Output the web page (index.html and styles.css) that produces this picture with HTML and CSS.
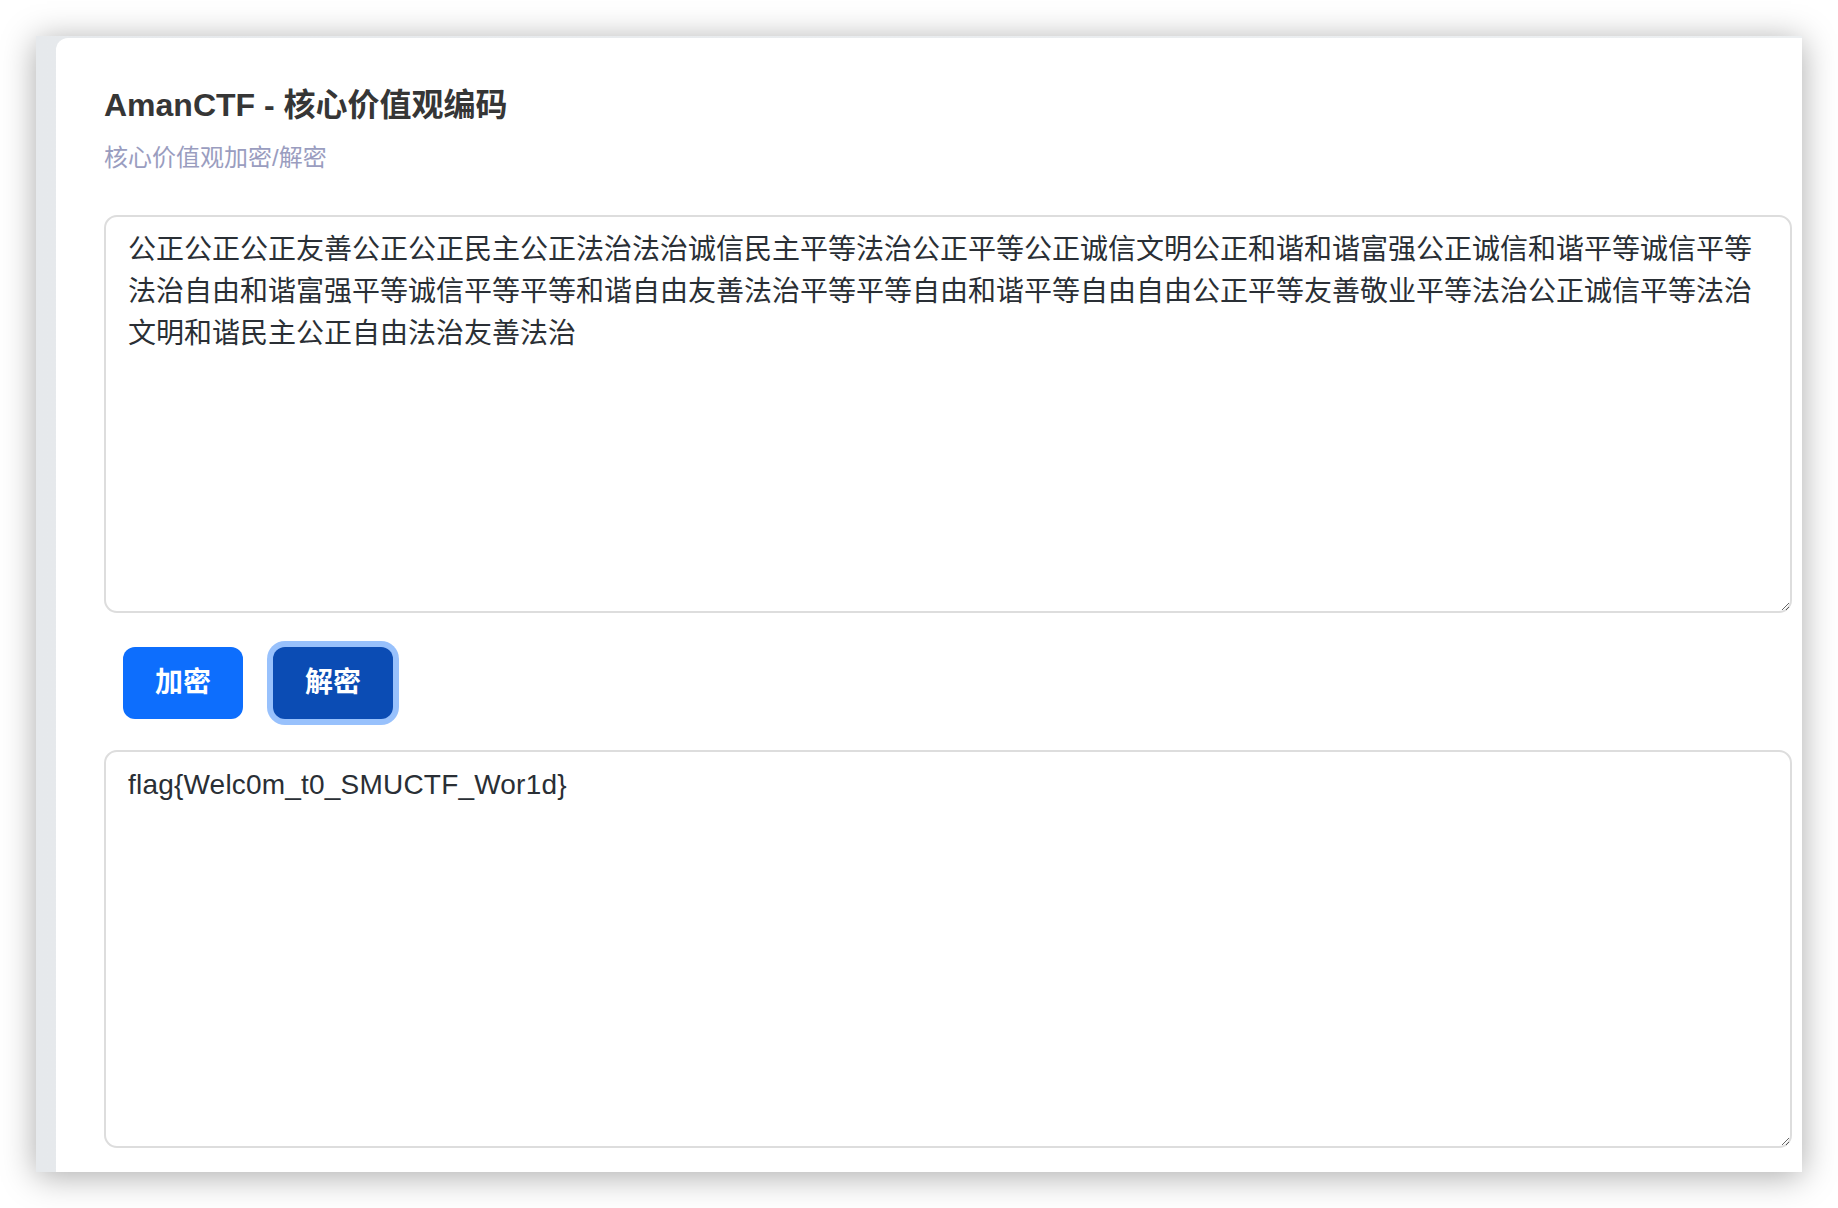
FILE: index.html
```html
<!DOCTYPE html>
<html lang="zh-CN">
<head>
<meta charset="utf-8">
<title>AmanCTF - 核心价值观编码</title>
<link rel="stylesheet" href="styles.css">
</head>
<body>
<div class="stage">
  <div class="window">
    <div class="card">
      <h1 class="title">AmanCTF - 核心价值观编码</h1>
      <p class="subtitle">核心价值观加密/解密</p>
      <textarea class="field">公正公正公正友善公正公正民主公正法治法治诚信民主平等法治公正平等公正诚信文明公正和谐和谐富强公正诚信和谐平等诚信平等法治自由和谐富强平等诚信平等平等和谐自由友善法治平等平等自由和谐平等自由自由公正平等友善敬业平等法治公正诚信平等法治文明和谐民主公正自由法治友善法治</textarea>
      <div class="actions">
        <button class="btn">加密</button>
        <button class="btn btn-active">解密</button>
      </div>
      <textarea class="field field-output">flag{Welc0m_t0_SMUCTF_Wor1d}</textarea>
    </div>
  </div>
</div>
</body>
</html>
```

FILE: styles.css
```css
html, body {
  margin: 0;
  padding: 0;
  background: #ffffff;
}

.stage {
  padding: 36px;
  width: 1766px;
  height: 1136px;
}

.window {
  width: 1766px;
  height: 1136px;
  background: linear-gradient(90deg, #e6e9ec 0%, #eceff1 100%);
  box-shadow: 0 4px 32px rgba(0, 0, 0, 0.34);
  padding: 2px 0 0 20px;
  box-sizing: border-box;
  overflow: hidden;
  display: flex;
}

.card {
  flex: 1;
  background: #ffffff;
  border-radius: 12px 0 0 0;
  padding: 48px 10px 0 48px;
  display: flex;
  flex-direction: column;
}

.title {
  margin: 0 0 16px 0;
  font-family: "Liberation Sans", "Noto Sans CJK SC", sans-serif;
  font-size: 32px;
  line-height: 38px;
  font-weight: 700;
  color: #363636;
}

.subtitle {
  margin: 0 0 39px 0;
  font-family: "Liberation Sans", "Noto Sans CJK SC", sans-serif;
  font-size: 24px;
  line-height: 36px;
  color: #9a9dbf;
}

.field {
  display: block;
  width: 100%;
  height: 398px;
  box-sizing: border-box;
  margin: 0;
  padding: 12px 22px 10px 22px;
  border: 2px solid #dddddd;
  border-radius: 13px;
  font-family: "Liberation Sans", "Noto Sans CJK SC", sans-serif;
  font-size: 28px;
  line-height: 42px;
  color: #2a2f35;
  background: #ffffff;
  resize: vertical;
  outline: none;
}

.field-output {
  letter-spacing: 0.2px;
}

.actions {
  display: flex;
  gap: 30px;
  padding-left: 19px;
  margin: 34px 0 31px 0;
}

.btn {
  width: 120px;
  height: 72px;
  box-sizing: border-box;
  border: none;
  border-radius: 12px;
  background: #0d6efd;
  color: #ffffff;
  font-family: "Liberation Sans", "Noto Sans CJK SC", sans-serif;
  font-size: 28px;
  font-weight: 700;
  line-height: 42px;
  padding: 0;
  cursor: pointer;
}

.btn-active {
  background: #0b4cb4;
  box-shadow: 0 0 0 6px #98c1fc;
}
```
